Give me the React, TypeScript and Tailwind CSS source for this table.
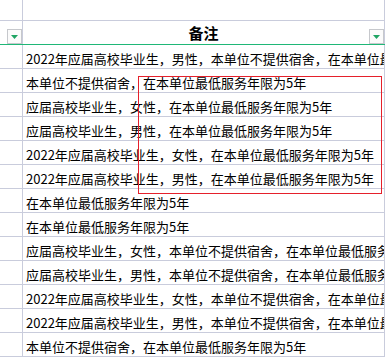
const rows = [
  '2022年应届高校毕业生，男性，本单位不提供宿舍，在本单位最低服务年限为5年',
  '本单位不提供宿舍，在本单位最低服务年限为5年',
  '应届高校毕业生，女性，在本单位最低服务年限为5年',
  '应届高校毕业生，男性，在本单位最低服务年限为5年',
  '2022年应届高校毕业生，女性，在本单位最低服务年限为5年',
  '2022年应届高校毕业生，男性，在本单位最低服务年限为5年',
  '在本单位最低服务年限为5年',
  '在本单位最低服务年限为5年',
  '应届高校毕业生，女性，本单位不提供宿舍，在本单位最低服务年限为5年',
  '应届高校毕业生，男性，本单位不提供宿舍，在本单位最低服务年限为5年',
  '2022年应届高校毕业生，女性，本单位不提供宿舍，在本单位最低服务年限为5年',
  '2022年应届高校毕业生，男性，本单位不提供宿舍，在本单位最低服务年限为5年',
  '本单位不提供宿舍，在本单位最低服务年限为5年',
];

function FilterButton() {
  return (
    <div className="w-[15px] h-[15px] border border-[#c6c8cc] bg-[#fbfbfb] flex items-center justify-center">
      <svg width="7" height="4" viewBox="0 0 7 4">
        <path d="M0 0 H7 L3.5 4 Z" fill="#1fa463" />
      </svg>
    </div>
  );
}

export default function App() {
  return (
    <div className="relative w-[387px] h-[357px] bg-white overflow-hidden font-['Noto_Sans_CJK_SC',sans-serif] text-black">
      <div className="w-[385px]">
        {/* blank top row */}
        <div className="flex h-[21px] border-b border-[#c9ccdc]">
          <div className="w-[23px] border-r border-[#c9ccdc]" />
          <div className="w-[362px] border-r border-[#c9ccdc]" />
        </div>

        {/* header */}
        <div className="flex h-[24px] border-b border-[#1fb777]">
          <div className="w-[23px] border-r border-[#c9ccdc] flex items-end justify-end">
            <FilterButton />
          </div>
          <div className="relative w-[362px] border-r border-[#c9ccdc] flex items-center justify-center">
            <span className="text-[15px] font-bold leading-[18px] pt-[1px]">备注</span>
            <div className="absolute right-0 bottom-0">
              <FilterButton />
            </div>
          </div>
        </div>

        {rows.map((text, i) => (
          <div key={i} className="flex h-[24px] border-b border-[#c9ccdc]">
            <div className="w-[23px] border-r border-[#c9ccdc]" />
            <div className="w-[362px] border-r border-[#c9ccdc] overflow-hidden flex items-end pb-[1px] pl-[3px]">
              <span className="text-[13px] leading-[17px] whitespace-nowrap">{text}</span>
            </div>
          </div>
        ))}
      </div>

      {/* drawn rectangle */}
      <div className="absolute left-[138px] top-[76px] w-[244px] h-[118px] border border-[#e5202b]" />
    </div>
  );
}
